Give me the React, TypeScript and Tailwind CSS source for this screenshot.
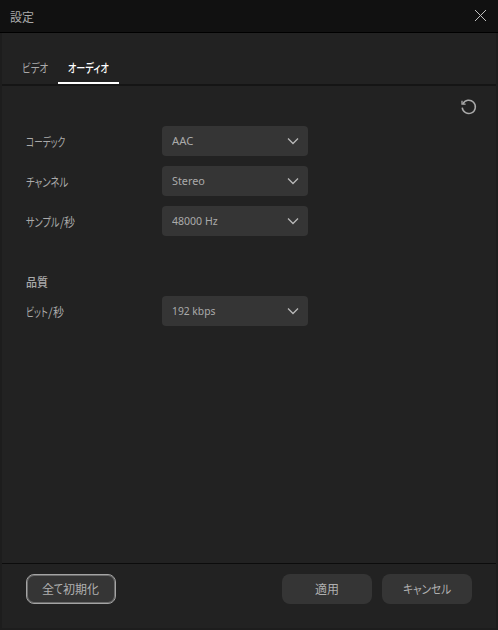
import { useLayoutEffect, useRef } from "react";
import clsx from "clsx";

// Text condensed or widened to an exact run width.
function Fit({ text, width, className }: { text: string; width: number; className?: string }) {
  const ref = useRef<HTMLSpanElement>(null);
  useLayoutEffect(() => {
    const el = ref.current;
    if (el) el.style.transform = `scaleX(${width / el.offsetWidth})`;
  }, [text, width]);
  return (
    <span className="inline-block whitespace-nowrap" style={{ width }}>
      <span ref={ref} className={clsx("inline-block origin-left [font-feature-settings:'palt']", className)}>
        {text}
      </span>
    </span>
  );
}

function Row({ parts, value, width }: { parts: [string, number][]; value: string; width: number }) {
  return (
    <div className="flex h-[30px] items-center">
      <div className="flex w-[136px] pt-0.5">
        {parts.map(([text, w]) => (
          <Fit key={text} text={text} width={w} />
        ))}
      </div>
      <button className="flex h-[30px] w-[146px] items-center justify-between rounded-[4px] bg-[#353535] pr-[9px] pl-[10px] font-['Noto_Sans',sans-serif] text-[11px] text-[#aaa]">
        <Fit text={value} width={width} />
        <svg className="h-[8px] w-[12px]" viewBox="0 0 12 8" fill="none" stroke="#b8b8b8" strokeWidth="1.3">
          <path d="M1 1.5 6 6.5 11 1.5" />
        </svg>
      </button>
    </div>
  );
}

export default function App() {
  return (
    <div className="flex h-[630px] w-[498px] flex-col bg-[#1d1d1d] font-['Noto_Sans_CJK_JP',sans-serif] text-[12px] leading-[18px] text-[#aaa]">
      <header className="flex h-[33px] shrink-0 items-center justify-between border-b border-black bg-[#111] pr-[11px] pl-[10px]">
        <Fit text="設定" width={24} className="pt-px" />
        <svg className="mb-px h-[13px] w-[13px]" viewBox="0 0 13 13" fill="none" stroke="#c0c0c0" strokeWidth="1">
          <path d="M1 1 12 12M12 1 1 12" />
        </svg>
      </header>
      <div className="mr-[2px] mb-[2px] ml-[2px] flex flex-1 flex-col bg-[#222]">
        <nav className="flex h-[53px] items-end border-b-2 border-[#151515] pl-[10px]">
          <div className="flex h-[31px] w-[46px] justify-center pt-[6px]">
            <Fit text="ビデオ" width={26} />
          </div>
          <div className="flex h-[31px] w-[61px] justify-center border-b-2 border-white pt-[6px] text-white">
            <Fit text="オーディオ" width={41} className="font-medium" />
          </div>
        </nav>
        <main className="flex flex-1 flex-col pl-[24px]">
          <div className="flex h-[40px] justify-end pt-[12px] pr-[19px]">
            <svg className="h-[18px] w-[18px]" viewBox="0 0 18 18" fill="none" stroke="#aaa" strokeWidth="1.5">
              <path d="M3.9 5.8A6.6 6.6 0 1 1 3.2 9.6" />
              <path d="M3 2.8V6.2H6.6" strokeWidth="1.3" />
            </svg>
          </div>
          <div className="flex flex-col gap-[10px]">
            <Row parts={[["コーデック", 39.5]]} value="AAC" width={21.5} />
            <Row parts={[["チャンネル", 42.5]]} value="Stereo" width={32.5} />
            <Row parts={[["サンプル", 33.5], ["/", 4.5], ["秒", 11]]} value="48000 Hz" width={46} />
          </div>
          <div className="mt-[37px] mb-[5px]">
            <Fit text="品質" width={22} className="font-medium" />
          </div>
          <Row parts={[["ビット", 22], ["/", 5], ["秒", 11]]} value="192 kbps" width={43} />
        </main>
        <footer className="flex h-[65px] border-t border-[#0c0c0c] px-[24px] pt-[10px] text-[#b0b0b0]">
          <button className="flex h-[30px] w-[90px] items-center justify-center rounded-[8px] border border-[#a4a4a4] bg-[#353535] pr-px shadow-[inset_0_0_0_1px_#6c6c6c]">
            <Fit text="全" width={12} />
            <Fit text="て" width={9} />
            <Fit text="初期化" width={36} />
          </button>
          <button className="ml-auto flex h-[30px] w-[90px] items-center justify-center rounded-[8px] bg-[#353535]">
            <Fit text="適用" width={24} />
          </button>
          <button className="ml-[10px] flex h-[30px] w-[90px] items-center justify-center rounded-[8px] bg-[#353535]">
            <Fit text="キャンセル" width={48} />
          </button>
        </footer>
      </div>
    </div>
  );
}
